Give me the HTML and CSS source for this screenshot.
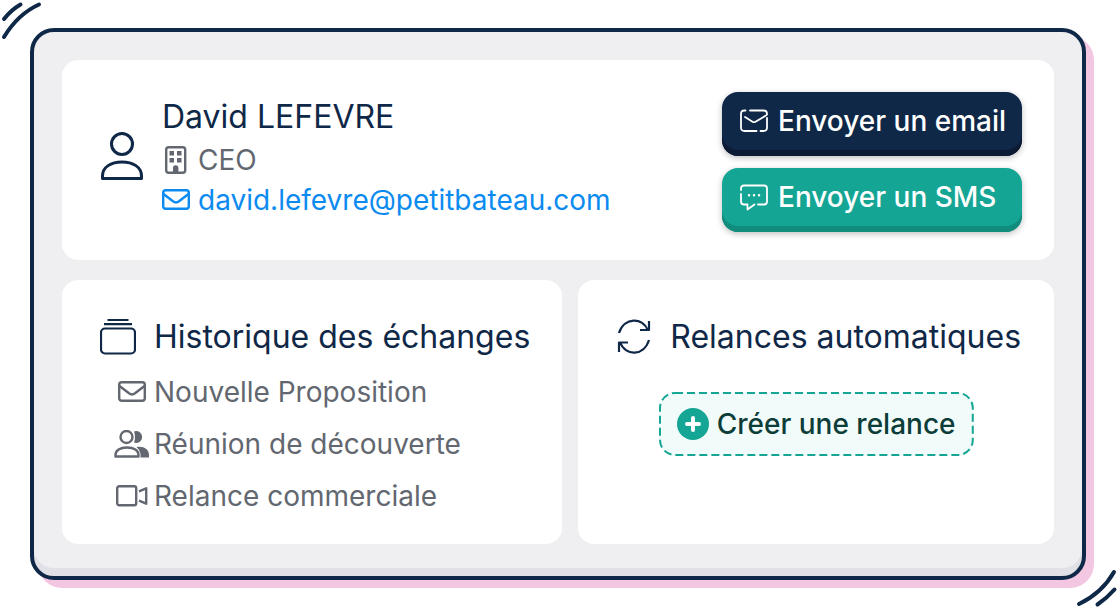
FILE: index.html
```html
<!DOCTYPE html>
<html lang="fr">
<head>
<meta charset="utf-8">
<meta name="viewport" content="width=device-width, initial-scale=1">
<title>David LEFEVRE</title>
<link rel="stylesheet" href="styles.css">
</head>
<body>
	<svg class="strokes strokes_top" width="44" height="42" viewBox="0 0 44 42">
		<path d="M20.500 4.500Q11 10 4 19M39 4.500Q18 14 4 37"/>
	</svg>
	<main class="panel">
		<section class="card contact">
			<svg class="icon avatar" width="44" height="48" viewBox="0 0 44 48">
				<circle cx="22" cy="12" r="10.500"/>
				<path d="M2.500 46.500V44C2.500 35 11 30 22 30S41.500 35 41.500 44V46.500Z"/>
			</svg>
			<div class="identity">
				<h1>David LEFEVRE</h1>
				<p class="line">
					<svg class="icon" width="28" height="28" viewBox="0 0 28 28">
						<rect x="4.200" y="1.200" width="19" height="25.600" rx="2.500"/>
						<path class="solid" d="M7.500 5h4.500v4.500H7.500zM15 5h4.500v4.500H15zM7.500 12h4.500v4.500H7.500zM15 12h4.500v4.500H15zM11 27v-5a2.700 2.700 0 0 1 5.400 0v5z"/>
					</svg>
					CEO
				</p>
				<p class="line">
					<a class="mail" href="mailto:david.lefevre@petitbateau.com">
						<svg class="icon" width="28" height="28" viewBox="0 0 28 28">
							<rect x="1.200" y="4.200" width="25.600" height="18.600" rx="2.500"/>
							<path d="M1.500 8L11 15.300Q14 17.500 17 15.300L26.500 8"/>
						</svg>
						david.lefevre@petitbateau.com
					</a>
				</p>
			</div>
			<div class="actions">
				<button type="button" class="btn btn_email">
					<svg class="icon thin" width="28" height="28" viewBox="0 0 28 28">
						<path d="M1 17V7Q1 3.500 4.500 3.500H5.500M10 3.500H23.500Q27 3.500 27 7V7.500M27 11V20.500Q27 24 23.500 24H20.500M16.500 24H4.500Q1 24 1 20.500V17M5 10L12.500 14.700Q14 15.600 15.500 14.700L26 8.500"/>
					</svg>
					Envoyer un email
				</button>
				<button type="button" class="btn btn_sms">
					<svg class="icon thin" width="28" height="28" viewBox="0 0 28 28">
						<path d="M1 7V5.500Q1 2.500 4 2.500H24Q27 2.500 27 5.500V18.500Q27 21.500 24 21.500H18M1 11V18.500Q1 21.500 4 21.500H7.500V26.500L14.500 21.500"/>
						<path class="dots" d="M9 12.300h.1M14 12.300h.1M19 12.300h.1"/>
					</svg>
					Envoyer un SMS
				</button>
			</div>
		</section>

		<div class="columns">
			<section class="card history">
				<h2>
					<svg class="icon title_icon" width="36" height="36" viewBox="0 0 36 36">
						<rect x="1" y="9.500" width="34" height="25" rx="4"/>
						<path d="M4 5.200H32M7.500 1H28.500"/>
					</svg>
					Historique des échanges
				</h2>
				<ul>
					<li>
						<svg class="icon" width="36" height="28" viewBox="0 0 36 28">
							<rect x="5.200" y="4.200" width="25.600" height="18.600" rx="2.500"/>
							<path d="M5.500 8L15 15.300Q18 17.500 21 15.300L30.500 8"/>
						</svg>
						Nouvelle Proposition
					</li>
					<li>
						<svg class="icon" width="36" height="28" viewBox="0 0 36 28">
							<circle cx="12.500" cy="7" r="6"/>
							<path d="M1.500 26.500V25C1.500 20.500 6 17.500 13 17.500S24.500 20.500 24.500 25V26.500Z"/>
							<path class="solid" d="M20 1.400A6 6 0 1 1 20 12.600Q22 7 20 1.400ZM22.500 17C30 16 35 19.500 35 25V27.500H26.500V24Q26 20 22.500 17Z"/>
						</svg>
						Réunion de découverte
					</li>
					<li>
						<svg class="icon" width="36" height="28" viewBox="0 0 36 28">
							<rect x="3.200" y="4.200" width="19" height="19" rx="2"/>
							<path d="M25 9.300L32.200 6.300V21.700L25 18.700"/>
						</svg>
						Relance commerciale
					</li>
				</ul>
			</section>

			<section class="card followups">
				<h2>
					<svg class="icon title_icon" width="36" height="36" viewBox="0 0 36 36">
						<path d="M3 14C8 -2 27 -2 32 11.500M33 2V11H24M33 21C28 37.500 9 37.500 4 23M3 33V23.500H12"/>
					</svg>
					Relances automatiques
				</h2>
				<button type="button" class="create">
					<svg class="dashes"><rect x="1" y="1" rx="15"/></svg>
					<svg width="32" height="32" viewBox="0 0 32 32">
						<circle class="plus_disc" cx="16" cy="16" r="16"/>
						<path class="plus" d="M16 10V22M10 16H22"/>
					</svg>
					Créer une relance
				</button>
			</section>
		</div>
	</main>
	<svg class="strokes strokes_bottom" width="44" height="42" viewBox="0 0 44 42">
		<path d="M40 6Q28 27 5 38M40.500 23.500Q33 32 23.500 38.500"/>
	</svg>
</body>
</html>
```
FILE: styles.css
```css
* {box-sizing:border-box;}
body {position:relative; margin:0; padding:28px 32px 28px 30px; background:#fff; color:#0f2847; font-family:Inter, "Liberation Sans", sans-serif; font-size:28px;}
h1, h2, p, ul {margin:0; padding:0; font-weight:400;}
svg {flex:none; display:block;}

/* panel */
.panel {padding:28px 28px 32px; border:4px solid #0f2847; border-radius:24px; background:#efeff2; box-shadow:inset 0 -8px 0 #e1e0e6, 8px 8px 0 #f3c6e1;}
.card {border-radius:16px; background:#fff;}
.columns {display:grid; grid-template-columns:500fr 476fr; gap:16px; margin-top:20px;}

/* line icons take the colour of the text beside them */
.icon {fill:none; stroke:currentColor; stroke-width:2.4; stroke-linejoin:round;}
.icon .solid {fill:currentColor; stroke:none;}
.avatar {stroke-width:3;}
.thin {stroke-width:1.8; stroke-linecap:round;}
.thin .dots {stroke-width:2.4;}
.title_icon {stroke-width:2.2;}

/* contact */
.contact {display:flex; align-items:flex-start; padding:32px 32px 28px 38px;}
.avatar {margin-top:40px;}
.identity {flex:1; margin-left:18px;}
h1 {padding-top:2px; font-size:32px; line-height:46px;}
.line {display:flex; align-items:center; gap:8px; line-height:40px; color:#626770;}
.mail {display:flex; align-items:center; gap:8px; color:#0b8bf0; text-decoration:none;}

.actions {display:grid; gap:12px; width:300px;}
.btn {display:flex; align-items:center; gap:10px; height:64px; padding:0 16px 6px 18px; border:0; border-radius:16px; color:#fff; font:500 28px Inter, "Liberation Sans", sans-serif; white-space:nowrap;}
.btn_email {background:#0f2847; box-shadow:inset 0 -6px 0 #0c1b33, 0 2px 6px rgba(0,0,0,.25);}
.btn_sms {background:#14a594; box-shadow:inset 0 -6px 0 #118b7c, 0 2px 6px rgba(0,0,0,.25);}

/* history and follow-ups */
.history, .followups {padding:32px 32px 22px;}
h2 {display:flex; align-items:center; gap:18px; margin-left:6px; font-size:32px; line-height:50px; white-space:nowrap;}
ul {margin-top:4px; padding-left:20px; list-style:none;}
li {display:flex; align-items:center; gap:4px; line-height:52px; color:#626770;}

.create {position:relative; display:flex; align-items:center; gap:8px; height:64px; margin:30px auto 0; padding:0 18px; border:0; border-radius:16px; background:#f1fbfa; color:#0d3d38; font:500 28px Inter, "Liberation Sans", sans-serif; white-space:nowrap;}
.dashes {position:absolute; top:0; left:0; width:100%; height:100%;}
.dashes rect {width:calc(100% - 2px); height:calc(100% - 2px); fill:none; stroke:#14a594; stroke-width:2; stroke-dasharray:8 4;}
.plus_disc {fill:#14a594;}
.plus {stroke:#fff; stroke-width:4; stroke-linecap:round;}

/* pen strokes around the panel */
.strokes {position:absolute; fill:none; stroke:#0f2847; stroke-width:4; stroke-linecap:round;}
.strokes_top {top:0; left:0;}
.strokes_bottom {right:0; bottom:0;}
```
